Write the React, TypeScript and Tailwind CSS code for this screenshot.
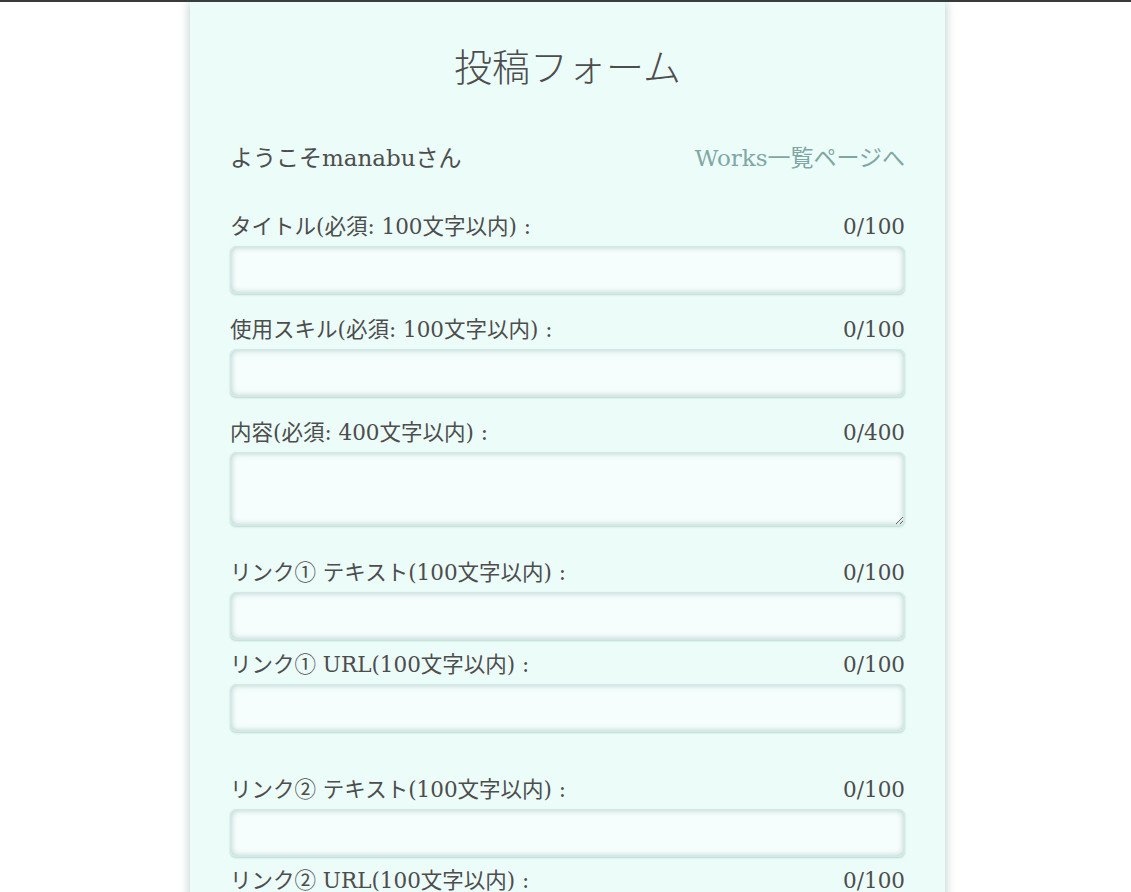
import { useState } from "react";

const fieldClass =
  "block w-full h-[48px] rounded-[6px] bg-[#f6fefd] border border-[#d3e9e6] shadow-[inset_0_0_6px_rgba(40,110,100,0.35),0_1px_2px_rgba(40,110,100,0.25)] outline-none px-3 text-[18px]";

type FieldProps = {
  label: string;
  max: number;
  value: string;
  onChange: (v: string) => void;
  textarea?: boolean;
  className?: string;
};

const Field = ({ label, max, value, onChange, textarea, className }: FieldProps) => (
  <div className={className}>
    <div className="flex justify-between items-center h-[30px] mb-[4px]">
      <span>{label}</span>
      <span>
        {value.length}/{max}
      </span>
    </div>
    {textarea ? (
      <textarea
        className={`${fieldClass} h-[74px] resize-y align-top`}
        value={value}
        onChange={(e) => onChange(e.target.value)}
      />
    ) : (
      <input className={fieldClass} value={value} onChange={(e) => onChange(e.target.value)} />
    )}
  </div>
);

const App = () => {
  const [form, setForm] = useState({
    title: "",
    skill: "",
    body: "",
    link1Text: "",
    link1Url: "",
    link2Text: "",
    link2Url: "",
  });

  const set = (key: keyof typeof form) => (v: string) => setForm({ ...form, [key]: v });

  return (
    <div
      className="min-h-screen bg-white border-t-2 border-[#3a3a3a] text-[#4d4d4d] pl-[4px]"
      style={{ fontFamily: '"DejaVu Serif", "Noto Sans CJK JP", serif' }}
    >
      <div className="w-[755px] mx-auto min-h-[890px] bg-[#ecfcf9] shadow-[0_0_10px_rgba(40,100,95,0.35)] px-[40px] pt-[40px] pb-10">
        <h1 className="text-center text-[38px] font-light leading-[52px]">投稿フォーム</h1>

        <div className="flex justify-between items-center h-[40px] mt-[44px] text-[23px]">
          <span>ようこそmanabuさん</span>
          <a href="#" className="text-[#7fa7a3]">
            Works一覧ページへ
          </a>
        </div>

        <div className="mt-[34px] text-[21.5px]">
          <Field label="タイトル(必須: 100文字以内) :" max={100} value={form.title} onChange={set("title")} />
          <Field
            className="mt-[21px]"
            label="使用スキル(必須: 100文字以内) :"
            max={100}
            value={form.skill}
            onChange={set("skill")}
          />
          <Field
            className="mt-[21px]"
            label="内容(必須: 400文字以内) :"
            max={400}
            value={form.body}
            onChange={set("body")}
            textarea
          />
          <Field
            className="mt-[32px]"
            label="リンク① テキスト(100文字以内) :"
            max={100}
            value={form.link1Text}
            onChange={set("link1Text")}
          />
          <Field
            className="mt-[10px]"
            label="リンク① URL(100文字以内) :"
            max={100}
            value={form.link1Url}
            onChange={set("link1Url")}
          />
          <Field
            className="mt-[43px]"
            label="リンク② テキスト(100文字以内) :"
            max={100}
            value={form.link2Text}
            onChange={set("link2Text")}
          />
          <Field
            className="mt-[9px]"
            label="リンク② URL(100文字以内) :"
            max={100}
            value={form.link2Url}
            onChange={set("link2Url")}
          />
        </div>
      </div>
    </div>
  );
};

export default App;
